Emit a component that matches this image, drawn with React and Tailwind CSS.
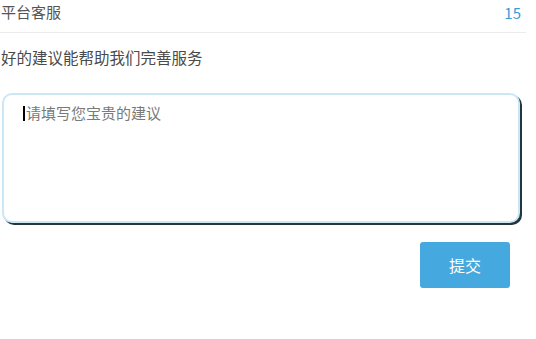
export default function App() {
  return (
    <div
      className="w-[536px] h-[339px] bg-white overflow-hidden"
      style={{ fontFamily: '"Noto Sans CJK SC", "Noto Sans", sans-serif' }}
    >
      <div className="mr-[10px] h-[33px] flex justify-between items-start pt-[2px] border-b border-[#ececec]">
        <span className="text-[15px] leading-[20px] text-[#555] pl-[1px]">平台客服</span>
        <span className="text-[15px] leading-[20px] text-[#3b9bd6] pr-[5px] pt-[1px]">15</span>
      </div>

      <p className="mt-[14px] text-[15.5px] leading-[20px] text-[#4a4a4a] pl-[1px]">
        好的建议能帮助我们完善服务
      </p>

      <div className="mt-[26px] ml-[2px] w-[518px] h-[130px] rounded-[10px] border-2 border-[#cbe7f6] shadow-[2px_2px_0_#22363f] bg-white">
        <div className="flex items-center pt-[8px] pl-[19px]">
          <span className="w-[2px] h-[15px] bg-black mr-[1px]" />
          <span className="text-[15px] leading-[20px] text-[#7a7a7a]">请填写您宝贵的建议</span>
        </div>
      </div>

      <div className="flex justify-end pr-[26px] mt-[19px]">
        <button className="w-[90px] h-[46px] rounded-[3px] bg-[#45a8de] text-white text-[16px]">
          提交
        </button>
      </div>
    </div>
  );
}
